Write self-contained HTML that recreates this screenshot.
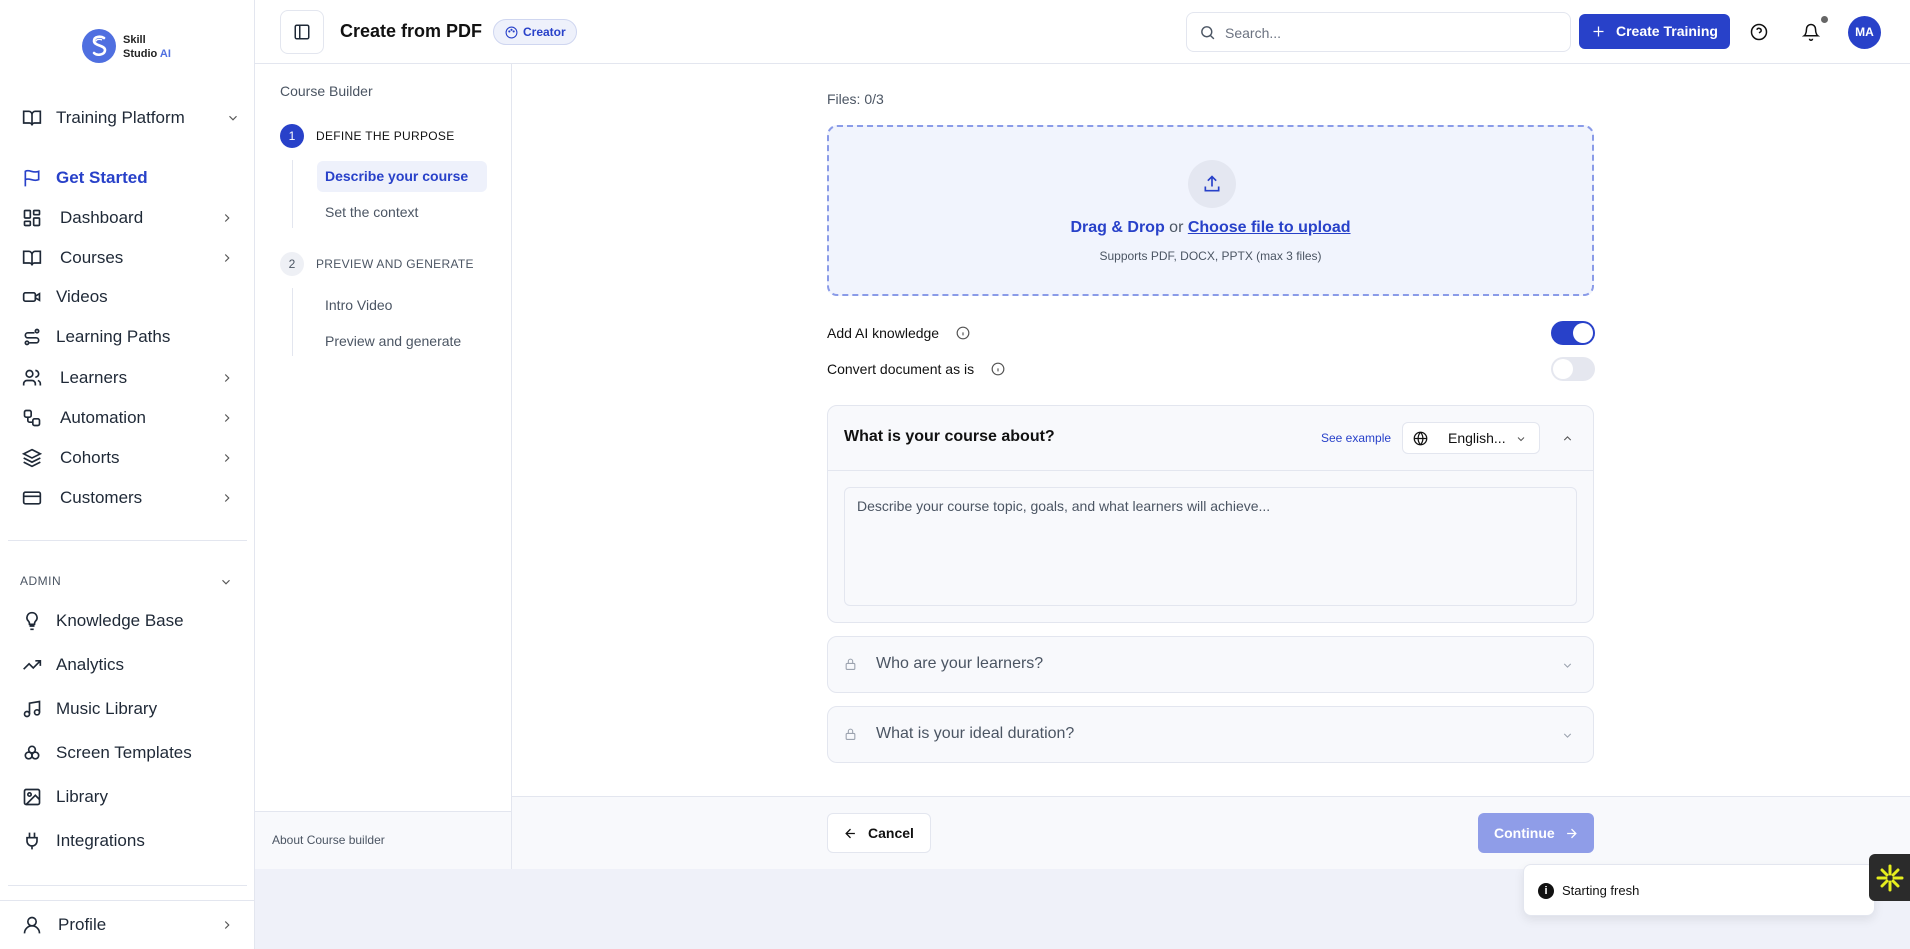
<!DOCTYPE html>
<html><head><meta charset="utf-8"><style>
*{box-sizing:border-box;margin:0;padding:0}
body{width:1910px;height:949px;overflow:hidden;font-family:"Liberation Sans",sans-serif;background:#eff1f9;position:relative;color:#111827}
.abs{position:absolute}
svg{display:block}
.side{left:0;top:0;width:255px;height:949px;background:#fff;border-right:1px solid #e3e6ef}
.nav{position:absolute;left:22px;display:flex;align-items:center;font-size:17px;color:#1f2937;width:210px}
.nav svg{width:20px;height:20px;margin-right:14px;flex:none}
.nav .chev{position:absolute;right:-2px;width:14px;height:14px;margin:0}
.hdr{left:255px;top:0;width:1655px;height:64px;background:#fff;border-bottom:1px solid #e3e6ef}
.cb{left:255px;top:64px;width:257px;height:805px;background:#fff;border-right:1px solid #e3e6ef}
.main{left:512px;top:64px;width:1398px;height:733px;background:#fff}
.card{position:absolute;left:827px;width:767px;border:1px solid #e3e6ef;border-radius:10px;background:#f8f9fc}
</style></head><body>

<div class="abs side">
  <svg class="abs" style="left:81px;top:28px" width="36" height="36" viewBox="0 0 36 36"><circle cx="18" cy="18" r="17" fill="#4f6fe0"/><path d="M23 10c-3-2-10-2-10 3s11 4 11 9-8 6-11 3" stroke="#fff" stroke-width="2.6" fill="none" stroke-linecap="round"/><path d="M21 12c-2-1-6-1-6 1.5" stroke="#fff" stroke-width="1.3" fill="none"/></svg>
  <div class="abs" style="left:123px;top:33px;font-size:11px;font-weight:bold;line-height:14px;color:#222">Skill<br>Studio <span style="color:#4f6fe0">AI</span></div>

  <div class="nav" style="top:108px;left:22px"><svg viewBox="0 0 24 24" fill="none" stroke="#1f2937" stroke-width="2"><path d="M2 4h6a4 4 0 014 4v13a3 3 0 00-3-3H2zM22 4h-6a4 4 0 00-4 4v13a3 3 0 013-3h7z"/></svg><span style="font-size:17px">Training Platform</span><svg class="chev" style="right:-8px" viewBox="0 0 24 24" fill="none" stroke="#555" stroke-width="2"><path d="M6 9l6 6 6-6"/></svg></div>

  <div class="nav" style="top:168px;color:#2841c9;font-weight:bold"><svg viewBox="0 0 24 24" fill="none" stroke="#2841c9" stroke-width="2"><path d="M4 22V4c5-3 9 3 16 0v10c-7 3-11-3-16 0"/></svg>Get Started</div>
  <div class="nav" style="top:208px"><svg viewBox="0 0 24 24" fill="none" stroke="#1f2937" stroke-width="2"><rect x="3" y="3" width="7" height="9" rx="1"/><rect x="14" y="3" width="7" height="5" rx="1"/><rect x="14" y="12" width="7" height="9" rx="1"/><rect x="3" y="16" width="7" height="5" rx="1"/></svg><span style="margin-left:4px">Dashboard</span><svg class="chev" viewBox="0 0 24 24" fill="none" stroke="#555" stroke-width="2"><path d="M9 6l6 6-6 6"/></svg></div>
  <div class="nav" style="top:248px"><svg viewBox="0 0 24 24" fill="none" stroke="#1f2937" stroke-width="2"><path d="M2 4h6a4 4 0 014 4v13a3 3 0 00-3-3H2zM22 4h-6a4 4 0 00-4 4v13a3 3 0 013-3h7z"/></svg><span style="margin-left:4px">Courses</span><svg class="chev" viewBox="0 0 24 24" fill="none" stroke="#555" stroke-width="2"><path d="M9 6l6 6-6 6"/></svg></div>
  <div class="nav" style="top:287px"><svg viewBox="0 0 24 24" fill="none" stroke="#1f2937" stroke-width="2"><rect x="2" y="7" width="14" height="10" rx="2"/><path d="M16 11l5-3v8l-5-3"/></svg>Videos</div>
  <div class="nav" style="top:327px"><svg viewBox="0 0 24 24" fill="none" stroke="#1f2937" stroke-width="2"><circle cx="6" cy="19" r="2"/><circle cx="18" cy="5" r="2"/><path d="M9 19h8a3 3 0 000-6H7a3 3 0 010-6h8"/></svg>Learning Paths</div>
  <div class="nav" style="top:368px"><svg viewBox="0 0 24 24" fill="none" stroke="#1f2937" stroke-width="2"><circle cx="9" cy="7" r="4"/><path d="M2 21v-2a4 4 0 014-4h6a4 4 0 014 4v2M16 3a4 4 0 010 8M22 21v-2a4 4 0 00-3-4"/></svg><span style="margin-left:4px">Learners</span><svg class="chev" viewBox="0 0 24 24" fill="none" stroke="#555" stroke-width="2"><path d="M9 6l6 6-6 6"/></svg></div>
  <div class="nav" style="top:408px"><svg viewBox="0 0 24 24" fill="none" stroke="#1f2937" stroke-width="2"><rect x="3" y="3" width="8" height="8" rx="2"/><rect x="13" y="13" width="8" height="8" rx="2"/><path d="M7 11v4a2 2 0 002 2h4"/></svg><span style="margin-left:4px">Automation</span><svg class="chev" viewBox="0 0 24 24" fill="none" stroke="#555" stroke-width="2"><path d="M9 6l6 6-6 6"/></svg></div>
  <div class="nav" style="top:448px"><svg viewBox="0 0 24 24" fill="none" stroke="#1f2937" stroke-width="2"><path d="M12 2l10 5-10 5L2 7zM2 12l10 5 10-5M2 17l10 5 10-5"/></svg><span style="margin-left:4px">Cohorts</span><svg class="chev" viewBox="0 0 24 24" fill="none" stroke="#555" stroke-width="2"><path d="M9 6l6 6-6 6"/></svg></div>
  <div class="nav" style="top:488px"><svg viewBox="0 0 24 24" fill="none" stroke="#1f2937" stroke-width="2"><rect x="2" y="5" width="20" height="14" rx="2"/><path d="M2 10h20"/></svg><span style="margin-left:4px">Customers</span><svg class="chev" viewBox="0 0 24 24" fill="none" stroke="#555" stroke-width="2"><path d="M9 6l6 6-6 6"/></svg></div>

  <div class="abs" style="left:8px;top:540px;width:239px;height:1px;background:#e3e6ef"></div>
  <div class="abs" style="left:20px;top:574px;font-size:12px;color:#4b5563;letter-spacing:.5px">ADMIN</div>
  <svg class="abs" style="left:219px;top:575px" width="14" height="14" viewBox="0 0 24 24" fill="none" stroke="#555" stroke-width="2"><path d="M6 9l6 6 6-6"/></svg>

  <div class="nav" style="top:611px"><svg viewBox="0 0 24 24" fill="none" stroke="#1f2937" stroke-width="2"><path d="M9 18h6M10 22h4M12 2a6 6 0 00-4 10.5c1 1 1 2 1 3.5h6c0-1.5 0-2.5 1-3.5A6 6 0 0012 2z"/></svg>Knowledge Base</div>
  <div class="nav" style="top:655px"><svg viewBox="0 0 24 24" fill="none" stroke="#1f2937" stroke-width="2"><path d="M22 7l-8.5 8.5-5-5L2 17M16 7h6v6"/></svg>Analytics</div>
  <div class="nav" style="top:699px"><svg viewBox="0 0 24 24" fill="none" stroke="#1f2937" stroke-width="2"><path d="M9 18V5l12-2v13"/><circle cx="6" cy="18" r="3"/><circle cx="18" cy="16" r="3"/></svg>Music Library</div>
  <div class="nav" style="top:743px"><svg viewBox="0 0 24 24" fill="none" stroke="#1f2937" stroke-width="2"><circle cx="12" cy="8" r="4"/><circle cx="8" cy="15" r="4"/><circle cx="16" cy="15" r="4"/></svg>Screen Templates</div>
  <div class="nav" style="top:787px"><svg viewBox="0 0 24 24" fill="none" stroke="#1f2937" stroke-width="2"><rect x="3" y="3" width="18" height="18" rx="2"/><circle cx="9" cy="9" r="2"/><path d="M21 15l-5-5L5 21"/></svg>Library</div>
  <div class="nav" style="top:831px"><svg viewBox="0 0 24 24" fill="none" stroke="#1f2937" stroke-width="2"><path d="M12 22v-5M9 8V2M15 8V2M18 8v4a6 6 0 01-12 0V8z"/></svg>Integrations</div>

  <div class="abs" style="left:8px;top:885px;width:239px;height:1px;background:#e3e6ef"></div>
  <div class="abs" style="left:0;top:900px;width:255px;height:1px;background:#e3e6ef"></div>
  <div class="nav" style="top:915px"><svg viewBox="0 0 24 24" fill="none" stroke="#1f2937" stroke-width="2"><circle cx="12" cy="8" r="5"/><path d="M3 22a9 9 0 0118 0"/></svg><span style="margin-left:2px">Profile</span><svg class="chev" viewBox="0 0 24 24" fill="none" stroke="#555" stroke-width="2"><path d="M9 6l6 6-6 6"/></svg></div>
</div>

<div class="abs hdr">
  <div class="abs" style="left:25px;top:10px;width:44px;height:44px;border:1px solid #e3e6ef;border-radius:8px"><svg style="margin:12px" width="18" height="18" viewBox="0 0 24 24" fill="none" stroke="#1f2937" stroke-width="2"><rect x="3" y="3" width="18" height="18" rx="2"/><path d="M9 3v18"/></svg></div>
  <div class="abs" style="left:85px;top:21px;font-size:18px;font-weight:bold;color:#111">Create from PDF</div>
  <div class="abs" style="left:238px;top:19px;width:84px;height:26px;border:1px solid #cfd6f0;border-radius:13px;background:#eef1fb;color:#2841c9;font-size:12px;font-weight:bold;line-height:24px;padding-left:29px">Creator<svg class="abs" style="left:11px;top:6px" width="13" height="13" viewBox="0 0 24 24" fill="none" stroke="#2841c9" stroke-width="2"><circle cx="12" cy="12" r="10"/><circle cx="8" cy="10" r="1"/><circle cx="12" cy="7" r="1"/><circle cx="16" cy="10" r="1"/></svg></div>
  <div class="abs" style="left:931px;top:12px;width:385px;height:40px;border:1px solid #e3e6ef;border-radius:8px"><svg class="abs" style="left:12px;top:11px" width="17" height="17" viewBox="0 0 24 24" fill="none" stroke="#4b5563" stroke-width="2"><circle cx="11" cy="11" r="7"/><path d="M21 21l-5-5"/></svg><span class="abs" style="left:38px;top:12px;font-size:14px;color:#6b7280">Search...</span></div>
  <div class="abs" style="left:1324px;top:14px;width:151px;height:35px;background:#2841c9;border-radius:6px;color:#fff;font-size:14px;font-weight:bold;line-height:35px;padding-left:37px"><svg class="abs" style="left:12px;top:10px" width="15" height="15" viewBox="0 0 24 24" fill="none" stroke="#fff" stroke-width="2"><path d="M12 4v16M4 12h16"/></svg>Create Training</div>
  <svg class="abs" style="left:1495px;top:23px" width="18" height="18" viewBox="0 0 24 24" fill="none" stroke="#111" stroke-width="2"><circle cx="12" cy="12" r="10"/><path d="M9.1 9a3 3 0 015.8 1c0 2-3 3-3 3M12 17h.01"/></svg>
  <svg class="abs" style="left:1547px;top:23px" width="18" height="18" viewBox="0 0 24 24" fill="none" stroke="#111" stroke-width="2"><path d="M6 8a6 6 0 0112 0c0 7 3 9 3 9H3s3-2 3-9M10 21a2 2 0 004 0"/></svg>
  <div class="abs" style="left:1566px;top:16px;width:7px;height:7px;border-radius:50%;background:#666"></div>
  <div class="abs" style="left:1593px;top:16px;width:33px;height:33px;border-radius:50%;background:#2841c9;color:#fff;font-size:12px;font-weight:bold;text-align:center;line-height:33px">MA</div>
</div>

<div class="abs cb">
  <div class="abs" style="left:25px;top:19px;font-size:14px;color:#4b5563">Course Builder</div>
  <div class="abs" style="left:25px;top:60px;width:24px;height:24px;border-radius:50%;background:#2841c9;color:#fff;font-size:12px;text-align:center;line-height:24px">1</div>
  <div class="abs" style="left:61px;top:65px;font-size:12px;color:#111;letter-spacing:.3px">DEFINE THE PURPOSE</div>
  <div class="abs" style="left:37px;top:96px;width:1px;height:68px;background:#e3e6ef"></div>
  <div class="abs" style="left:62px;top:97px;width:170px;height:31px;border-radius:6px;background:#eef1fb;color:#2841c9;font-size:14px;font-weight:bold;line-height:31px;padding-left:8px">Describe your course</div>
  <div class="abs" style="left:70px;top:140px;font-size:14px;color:#4b5563">Set the context</div>
  <div class="abs" style="left:25px;top:188px;width:24px;height:24px;border-radius:50%;background:#eef0f5;color:#4b5563;font-size:12px;text-align:center;line-height:24px">2</div>
  <div class="abs" style="left:61px;top:193px;font-size:12px;color:#4b5563;letter-spacing:.3px">PREVIEW AND GENERATE</div>
  <div class="abs" style="left:37px;top:224px;width:1px;height:68px;background:#e3e6ef"></div>
  <div class="abs" style="left:70px;top:233px;font-size:14px;color:#4b5563">Intro Video</div>
  <div class="abs" style="left:70px;top:269px;font-size:14px;color:#4b5563">Preview and generate</div>
  <div class="abs" style="left:0;top:747px;width:256px;height:58px;background:#f8f9fc;border-top:1px solid #e3e6ef"><span class="abs" style="left:17px;top:21px;font-size:12px;color:#4b5563">About Course builder</span></div>
</div>

<div class="abs main"></div>
<div class="abs" style="left:827px;top:91px;font-size:14px;color:#4b5563">Files: 0/3</div>
<div class="abs" style="left:827px;top:125px;width:767px;height:171px;border:2px dashed #8a9be8;border-radius:10px;background:#f1f4fd">
  <div class="abs" style="left:359px;top:33px;width:48px;height:48px;border-radius:50%;background:#e4e7f1"><svg style="margin:14px" width="20" height="20" viewBox="0 0 24 24" fill="none" stroke="#2841c9" stroke-width="2"><path d="M12 15V3M7 8l5-5 5 5M4 15v5h16v-5"/></svg></div>
  <div class="abs" style="left:0;width:763px;top:92px;text-align:center;font-size:16px;color:#4b5563"><b style="color:#2841c9">Drag &amp; Drop</b> or <b style="color:#2841c9;text-decoration:underline">Choose file to upload</b></div>
  <div class="abs" style="left:0;width:763px;top:122px;text-align:center;font-size:12px;color:#4b5563">Supports PDF, DOCX, PPTX (max 3 files)</div>
</div>
<div class="abs" style="left:827px;top:325px;font-size:14px;color:#111">Add AI knowledge</div>
<svg class="abs" style="left:956px;top:326px" width="14" height="14" viewBox="0 0 24 24" fill="none" stroke="#555" stroke-width="2"><circle cx="12" cy="12" r="10"/><path d="M12 16v-5M12 8h.01"/></svg>
<div class="abs" style="left:827px;top:361px;font-size:14px;color:#111">Convert document as is</div>
<svg class="abs" style="left:991px;top:362px" width="14" height="14" viewBox="0 0 24 24" fill="none" stroke="#555" stroke-width="2"><circle cx="12" cy="12" r="10"/><path d="M12 16v-5M12 8h.01"/></svg>
<div class="abs" style="left:1551px;top:321px;width:44px;height:24px;border-radius:12px;background:#2841c9"><div class="abs" style="left:22px;top:2px;width:20px;height:20px;border-radius:50%;background:#fff"></div></div>
<div class="abs" style="left:1551px;top:357px;width:44px;height:24px;border-radius:12px;background:#e5e7ef"><div class="abs" style="left:2px;top:2px;width:20px;height:20px;border-radius:50%;background:#fff"></div></div>

<div class="card" style="top:405px;height:218px">
  <div class="abs" style="left:0;top:0;width:765px;height:65px;border-bottom:1px solid #e3e6ef"></div>
  <div class="abs" style="left:16px;top:22px;font-size:16px;font-weight:bold;color:#111">What is your course about?</div>
  <div class="abs" style="left:493px;top:25px;font-size:12px;color:#2841c9">See example</div>
  <div class="abs" style="left:574px;top:16px;width:138px;height:32px;border:1px solid #e3e6ef;border-radius:6px;background:#fff"><svg class="abs" style="left:10px;top:8px" width="15" height="15" viewBox="0 0 24 24" fill="none" stroke="#111" stroke-width="2"><circle cx="12" cy="12" r="10"/><path d="M2 12h20M12 2a15 15 0 010 20M12 2a15 15 0 000 20"/></svg><span class="abs" style="left:45px;top:7px;font-size:14px;color:#111">English...</span><svg class="abs" style="left:112px;top:10px" width="12" height="12" viewBox="0 0 24 24" fill="none" stroke="#555" stroke-width="2"><path d="M6 9l6 6 6-6"/></svg></div>
  <svg class="abs" style="left:733px;top:26px" width="13" height="13" viewBox="0 0 24 24" fill="none" stroke="#555" stroke-width="2"><path d="M6 15l6-6 6 6"/></svg>
  <div class="abs" style="left:16px;top:81px;width:733px;height:119px;border:1px solid #e3e6ef;border-radius:6px;background:#f8f9fc"><span class="abs" style="left:12px;top:10px;font-size:14px;color:#4b5563">Describe your course topic, goals, and what learners will achieve...</span></div>
</div>
<div class="card" style="top:636px;height:57px"><svg class="abs" style="left:16px;top:20px" width="13" height="14" viewBox="0 0 24 24" fill="none" stroke="#9ca3af" stroke-width="2"><rect x="4" y="11" width="16" height="11" rx="2"/><path d="M8 11V7a4 4 0 018 0v4"/></svg><span class="abs" style="left:48px;top:18px;font-size:16px;color:#4b5563">Who are your learners?</span><svg class="abs" style="left:733px;top:22px" width="13" height="13" viewBox="0 0 24 24" fill="none" stroke="#9ca3af" stroke-width="2"><path d="M6 9l6 6 6-6"/></svg></div>
<div class="card" style="top:706px;height:57px"><svg class="abs" style="left:16px;top:20px" width="13" height="14" viewBox="0 0 24 24" fill="none" stroke="#9ca3af" stroke-width="2"><rect x="4" y="11" width="16" height="11" rx="2"/><path d="M8 11V7a4 4 0 018 0v4"/></svg><span class="abs" style="left:48px;top:18px;font-size:16px;color:#4b5563">What is your ideal duration?</span><svg class="abs" style="left:733px;top:22px" width="13" height="13" viewBox="0 0 24 24" fill="none" stroke="#9ca3af" stroke-width="2"><path d="M6 9l6 6 6-6"/></svg></div>

<div class="abs" style="left:512px;top:796px;width:1398px;height:73px;background:#f8f9fc;border-top:1px solid #e3e6ef"></div>
<div class="abs" style="left:827px;top:813px;width:104px;height:40px;border:1px solid #e3e6ef;border-radius:6px;background:#fff;font-size:14px;font-weight:bold;color:#111;line-height:38px;padding-left:40px"><svg class="abs" style="left:15px;top:12px" width="15" height="15" viewBox="0 0 24 24" fill="none" stroke="#111" stroke-width="2"><path d="M19 12H5M12 19l-7-7 7-7"/></svg>Cancel</div>
<div class="abs" style="left:1478px;top:813px;width:116px;height:40px;border-radius:6px;background:#8f9de8;font-size:14px;font-weight:bold;color:#fff;line-height:40px;padding-left:16px">Continue<svg class="abs" style="left:86px;top:13px" width="15" height="15" viewBox="0 0 24 24" fill="none" stroke="#fff" stroke-width="2"><path d="M5 12h14M12 5l7 7-7 7"/></svg></div>

<div class="abs" style="left:1523px;top:864px;width:352px;height:52px;background:#fff;border:1px solid #e3e6ef;border-radius:8px;box-shadow:0 4px 10px rgba(0,0,0,.08)">
  <div class="abs" style="left:14px;top:18px;width:16px;height:16px;border-radius:50%;background:#111;color:#fff;font-size:11px;font-weight:bold;text-align:center;line-height:16px">i</div>
  <span class="abs" style="left:38px;top:18px;font-size:13px;color:#111">Starting fresh</span>
</div>
<div class="abs" style="left:1869px;top:854px;width:41px;height:47px;background:#2b2b2b;border-radius:6px 0 0 6px"><svg style="margin:9px 6px" width="30" height="30" viewBox="0 0 30 30" stroke="#e6ee1e" stroke-width="3" stroke-linecap="round"><path d="M15 3v8M15 19v8M3 15h8M19 15h8M7 7l5 5M18 18l5 5M23 7l-5 5M12 18l-5 5"/></svg></div>
</body></html>
